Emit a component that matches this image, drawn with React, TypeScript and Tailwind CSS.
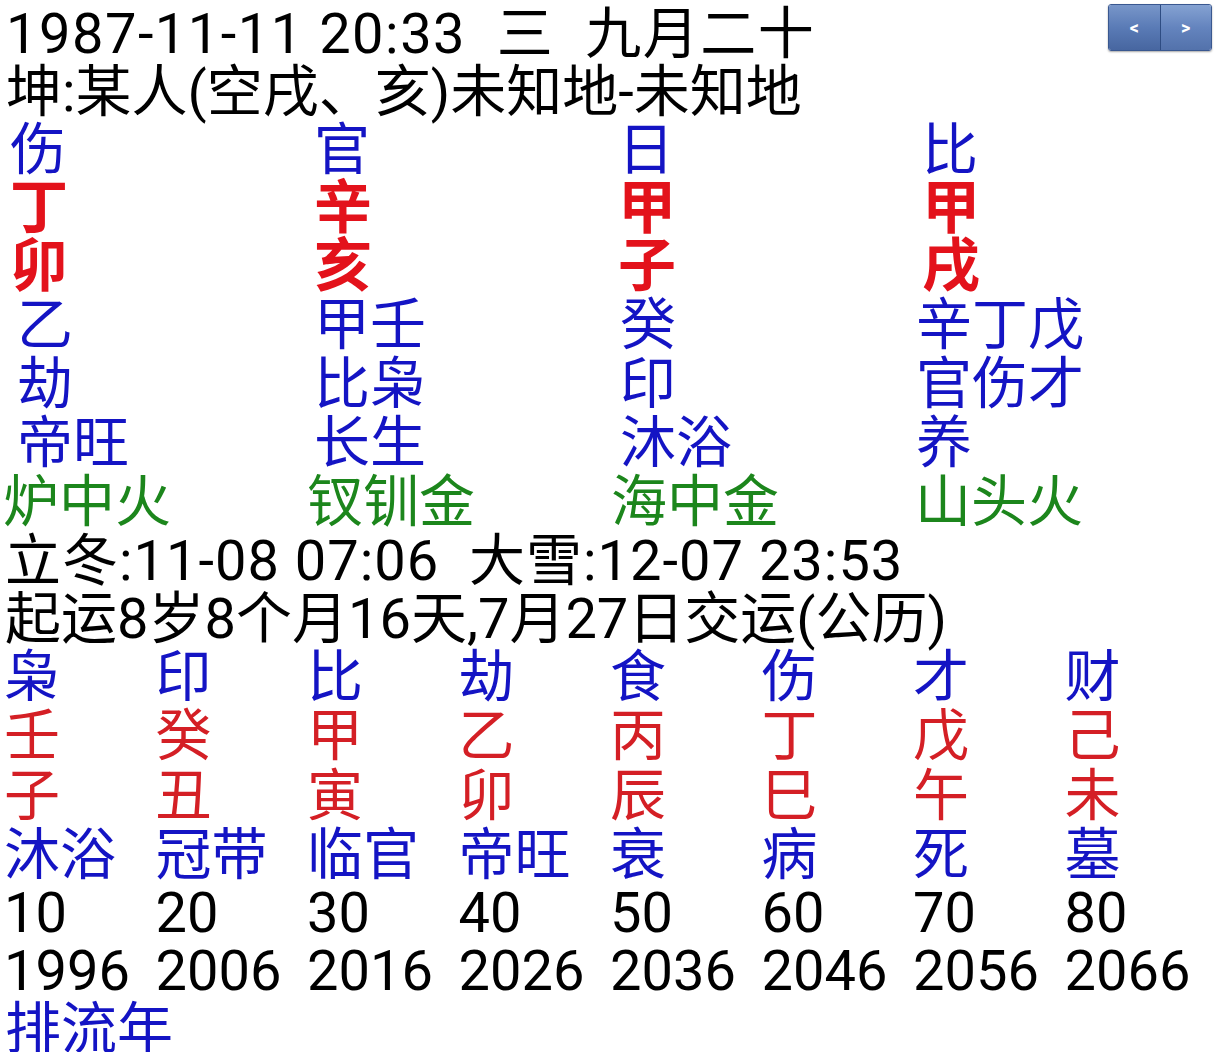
const BLUE = "text-[#1414c4]";
const RED = "text-[#e3121b]";
const GREEN = "text-[#1c861c]";

const pillars = [
  { god: "伤", stem: "丁", branch: "卯", hidden: "乙", hiddenGods: "劫", stage: "帝旺", nayin: "炉中火", shift: "ml-[7px]" },
  { god: "官", stem: "辛", branch: "亥", hidden: "甲壬", hiddenGods: "比枭", stage: "长生", nayin: "钗钏金", shift: "ml-0" },
  { god: "日", stem: "甲", branch: "子", hidden: "癸", hiddenGods: "印", stage: "沐浴", nayin: "海中金", shift: "ml-[2px]" },
  { god: "比", stem: "甲", branch: "戌", hidden: "辛丁戊", hiddenGods: "官伤才", stage: "养", nayin: "山头火", shift: "-ml-[6px]" },
];

const dayun = [
  { god: "枭", stem: "壬", branch: "子", stage: "沐浴", age: "10", year: "1996" },
  { god: "印", stem: "癸", branch: "丑", stage: "冠带", age: "20", year: "2006" },
  { god: "比", stem: "甲", branch: "寅", stage: "临官", age: "30", year: "2016" },
  { god: "劫", stem: "乙", branch: "卯", stage: "帝旺", age: "40", year: "2026" },
  { god: "食", stem: "丙", branch: "辰", stage: "衰", age: "50", year: "2036" },
  { god: "伤", stem: "丁", branch: "巳", stage: "病", age: "60", year: "2046" },
  { god: "才", stem: "戊", branch: "午", stage: "死", age: "70", year: "2056" },
  { god: "财", stem: "己", branch: "未", stage: "墓", age: "80", year: "2066" },
];

function Row({ children, className = "" }: { children: React.ReactNode; className?: string }) {
  return <div className={`h-[58px] leading-[58px] whitespace-pre ${className}`}>{children}</div>;
}

export default function App() {
  return (
    <div
      className="relative min-h-[1052px] w-[1216px] overflow-hidden bg-white pt-[5px] text-[56px] text-black"
      style={{ fontFamily: 'Roboto, "Noto Sans CJK SC", sans-serif' }}
    >
      {/* prev / next */}
      <div className="absolute right-[4px] top-[4px] flex h-[47px] w-[104px] overflow-hidden rounded-[3px] border border-[#3a5890] shadow-[0_1px_2px_rgba(0,0,0,0.35)]">
        <button className="flex flex-1 items-center justify-center border-r border-[#2e4c82] bg-gradient-to-b from-[#7896c9] via-[#5a7bb6] to-[#4766a0] text-[18px] font-bold leading-none text-white">
          &lt;
        </button>
        <button className="flex flex-1 items-center justify-center bg-gradient-to-b from-[#85a2d2] via-[#6484be] to-[#5372ab] text-[18px] font-bold leading-none text-white">
          &gt;
        </button>
      </div>

      <div className="px-[6px]">
        <Row className="tracking-[1.5px]">1987-11-11 20:33  三  九月二十</Row>
        <Row>坤:某人(空戌、亥)未知地-未知地</Row>
      </div>

      {/* four pillars */}
      <div className="grid grid-cols-[304px_304px_304px_1fr] pl-[10px]">
        {pillars.map((p, i) => (
          <div key={i}>
            <Row className={BLUE}>{p.god}</Row>
            <Row className={`${RED} text-[58px] font-bold`}>{p.stem}</Row>
            <Row className={`${RED} text-[58px] font-bold`}>{p.branch}</Row>
            <Row className={`${BLUE} ${p.shift} h-[60px] leading-[60px]`}>{p.hidden}</Row>
            <Row className={`${BLUE} ${p.shift} h-[59px] leading-[59px]`}>{p.hiddenGods}</Row>
            <Row className={`${BLUE} ${p.shift}`}>{p.stage}</Row>
            <Row className={`${GREEN} -ml-[7px] h-[60px] leading-[60px]`}>{p.nayin}</Row>
          </div>
        ))}
      </div>

      <div className="px-[5px]">
        <Row className="tracking-[1px]">立冬:11-08 07:06  大雪:12-07 23:53</Row>
        <Row>起运8岁8个月16天,7月27日交运(公历)</Row>
      </div>

      {/* da yun */}
      <div className="grid grid-cols-8 pl-[4px]">
        {dayun.map((d, i) => (
          <div key={i}>
            <Row className={`${BLUE} h-[59px] leading-[59px]`}>{d.god}</Row>
            <Row className="h-[59px] leading-[59px] text-[#d41f25]">{d.stem}</Row>
            <Row className="h-[60px] leading-[60px] text-[#d41f25]">{d.branch}</Row>
            <Row className={`${BLUE} h-[57px] leading-[57px]`}>{d.stage}</Row>
            <Row className="h-[54px] leading-[54px]">{d.age}</Row>
            <Row>{d.year}</Row>
          </div>
        ))}
      </div>

      <div className="px-[5px]">
        <Row className={BLUE}>排流年</Row>
      </div>
    </div>
  );
}
